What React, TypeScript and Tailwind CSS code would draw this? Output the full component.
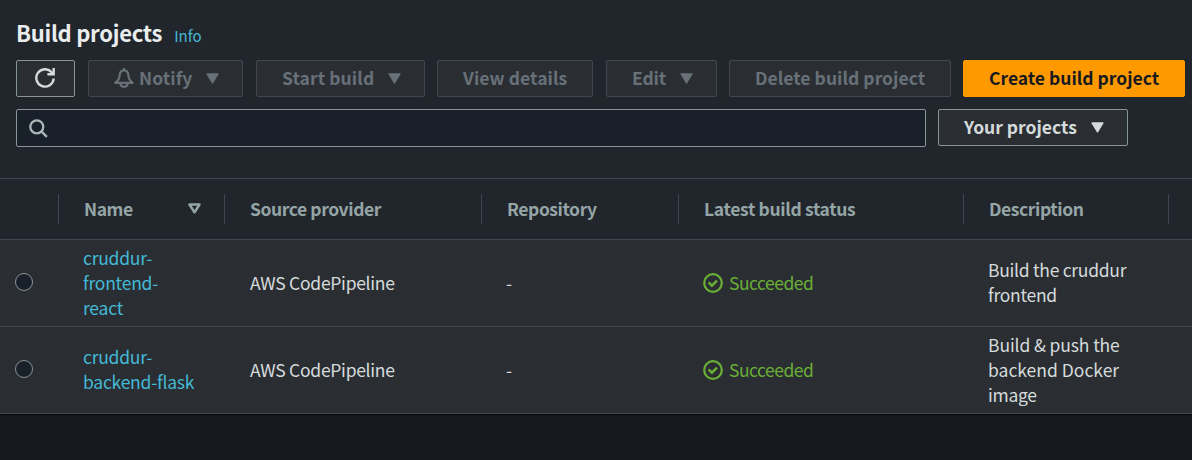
import type { ReactNode } from "react";

type Project = { name: string[]; provider: string; repository: string; status: string; description: string[] };

const projects: Project[] = [
  {
    name: ["cruddur-", "frontend-", "react"],
    provider: "AWS CodePipeline",
    repository: "-",
    status: "Succeeded",
    description: ["Build the cruddur", "frontend"],
  },
  {
    name: ["cruddur-", "backend-flask"],
    provider: "AWS CodePipeline",
    repository: "-",
    status: "Succeeded",
    description: ["Build & push the", "backend Docker", "image"],
  },
];

const columns = "grid grid-cols-[58px_166px_257px_197px_285px_205px_24px]";

function Caret() {
  return (
    <svg className="ml-[14px] h-[11px] w-[13px] shrink-0" viewBox="0 0 13 11">
      <path d="M1 1h11L6.500 10z" fill="currentColor" stroke="currentColor" strokeWidth="1.300" strokeLinejoin="round" />
    </svg>
  );
}

function Button({ className, children, tone = "disabled" }: { className: string; children: ReactNode; tone?: "disabled" | "normal" | "primary" }) {
  const tones = {
    disabled: "border-[#414750] bg-[#2a2e33] text-[#687078]",
    normal: "border-[#879596] bg-[#2a2e33] text-[#d5dbdb]",
    primary: "border-[#ff9900] bg-[#ff9900] text-[#16191f]",
  };
  return (
    <button
      className={`flex h-[37px] shrink-0 items-center rounded-[2px] border text-[17.5px] leading-[25px] font-bold whitespace-nowrap ${tones[tone]} ${className}`}
    >
      {children}
    </button>
  );
}

function Label({ className = "", children }: { className?: string; children: ReactNode }) {
  return <span className={`mb-[2px] ${className}`}>{children}</span>;
}

function HeaderCell({ children }: { children?: ReactNode }) {
  return (
    <div className="flex h-[30px] items-center border-l border-[#414750] pl-[25px] text-[17.5px] leading-[25px] font-bold tracking-[-0.42px] whitespace-nowrap">
      {children}
    </div>
  );
}

function Row({ project }: { project: Project }) {
  return (
    <div className={`${columns} h-[87px] items-center border-b border-[#414750] text-[17.5px] leading-[25px] tracking-[-0.28px] whitespace-nowrap text-[#d5dbdb]`}>
      <div className="mb-[2px] ml-[15px] size-[18px] rounded-full border border-[#879596] bg-[#1a2029]" />
      <div className="mb-[2px] pl-[25px] tracking-[-0.24px] text-[#44b9d6]">
        {project.name.map((line) => (
          <div key={line}>{line}</div>
        ))}
      </div>
      <div className="mb-[2px] pl-[26px]">{project.provider}</div>
      <div className="mb-[2px] pl-[25px]">{project.repository}</div>
      <div className="flex items-center pl-[25px] text-[#6aaf35]">
        <svg className="mr-[6px] size-5" viewBox="0 0 20 20" fill="none" stroke="currentColor" strokeWidth="2.200">
          <circle cx="10" cy="10" r="8.800" />
          <path d="M5.600 9.400l3.300 3.300 5.100-5.100" strokeWidth="2.500" />
        </svg>
        <Label className="tracking-[-0.5px]">{project.status}</Label>
      </div>
      <div className="mb-[2px] pl-[25px]">
        {project.description.map((line) => (
          <div key={line} className={line.includes("&") ? "tracking-[-0.12px]" : line.includes("Docker") ? "tracking-[0px]" : ""}>
            {line}
          </div>
        ))}
      </div>
    </div>
  );
}

export default function App() {
  return (
    <div className="h-[460px] w-[1192px] overflow-hidden bg-[#16191f] font-['Noto_Sans_CJK_SC','Noto_Sans',sans-serif]">
      <section className="bg-[#2a2e33] shadow-[0_1px_2px_rgba(0,0,0,0.7)]">
        <header className="h-[179px] border-b border-[#414750] bg-[#21252c] pt-[18px] pl-4">
          <div className="flex h-[28px] items-baseline leading-[28px]">
            <h1 className="text-[22px] font-bold tracking-[-0.26px] text-[#eaeded]">Build projects</h1>
            <a className="ml-[12px] text-[15px] text-[#44b9d6]">Info</a>
          </div>
          <div className="mt-[14px] flex">
            <Button tone="normal" className="w-[59px] pl-[18px]">
              <svg className="mb-px size-5" viewBox="0 0 20 20" fill="none" stroke="currentColor" strokeWidth="2.400">
                <path d="M18.700 10.500A8.700 8.700 0 1 1 16.700 4.300l1.400 1.900" />
                <path d="M18.700 0v6.200h-6.300" />
              </svg>
            </Button>
            <Button className="ml-[13px] w-[155px] pl-[25px]">
              <svg className="mr-[5px] mb-px size-5" viewBox="0 0 20 20" fill="none" stroke="currentColor" strokeWidth="2.200" strokeLinejoin="round">
                <path d="M10 0v2.500M10 2.300C7 2.300 5.800 4.700 5.600 7.300 5.400 10.800 4.200 12.700 1.300 14.800h17.400C15.800 12.700 14.600 10.800 14.400 7.300 14.200 4.700 13 2.300 10 2.300z" />
                <path d="M6.500 15.500c0 2 1.300 3.300 3.500 3.300s3.500-1.300 3.500-3.300" />
              </svg>
              <Label className="tracking-[0.1px]">Notify</Label>
              <Caret />
            </Button>
            <Button className="ml-[13px] w-[169px] pl-[25px]">
              <Label className="tracking-[0.1px]">Start build</Label>
              <Caret />
            </Button>
            <Button className="ml-[12px] w-[156px] pl-[25px]">
              <Label className="tracking-[0.08px]">View details</Label>
            </Button>
            <Button className="ml-[13px] w-[111px] pl-[25px]">
              <Label className="tracking-[-0.12px]">Edit</Label>
              <Caret />
            </Button>
            <Button className="ml-[12px] w-[222px] pl-[25px]">
              <Label className="tracking-[0.04px]">Delete build project</Label>
            </Button>
            <Button tone="primary" className="ml-[12px] w-[222px] pl-[25px]">
              <Label>Create build project</Label>
            </Button>
          </div>
          <div className="mt-[12px] flex items-start gap-3">
            <div className="flex h-[38px] w-[910px] items-center rounded-[2px] border border-[#879596] bg-[#1a2029] pl-[12px] text-[#aab7b8]">
              <svg className="size-[19px]" viewBox="0 0 19 19" fill="none" stroke="currentColor" strokeWidth="2.300">
                <circle cx="7.800" cy="7.800" r="6.500" />
                <path d="M12.400 12.400l5.500 5.500" />
              </svg>
            </div>
            <Button tone="normal" className="w-[190px] pl-[25px]">
              <Label>Your projects</Label>
              <Caret />
            </Button>
          </div>
        </header>
        <div className={`${columns} h-[61px] items-center border-b border-[#414750] bg-[#21252c] text-[#95a5a6]`}>
          <div />
          <HeaderCell>
            <Label>Name</Label>
            <svg className="mr-[23px] mb-px ml-auto h-[11px] w-[13px]" viewBox="0 0 13 11">
              <path d="M1.500 1.500h10L6.500 9.300z" fill="none" stroke="currentColor" strokeWidth="2.500" strokeLinejoin="round" />
            </svg>
          </HeaderCell>
          <HeaderCell>
            <Label>Source provider</Label>
          </HeaderCell>
          <HeaderCell>
            <Label>Repository</Label>
          </HeaderCell>
          <HeaderCell>
            <Label className="tracking-[-0.34px]">Latest build status</Label>
          </HeaderCell>
          <HeaderCell>
            <Label>Description</Label>
          </HeaderCell>
          <HeaderCell />
        </div>
        {projects.map((project) => (
          <Row key={project.name.join("")} project={project} />
        ))}
      </section>
    </div>
  );
}
